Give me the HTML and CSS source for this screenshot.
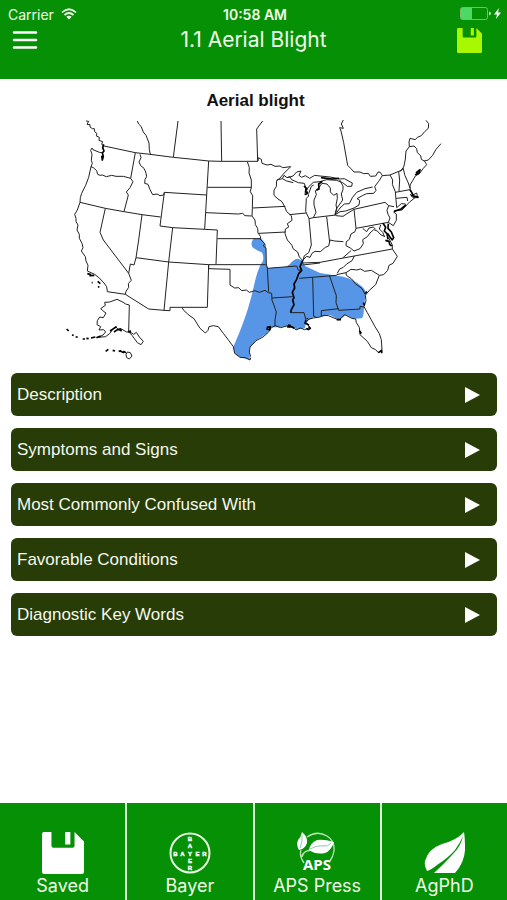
FILE: index.html
```html
<!DOCTYPE html>
<html lang="en">
<head>
<meta charset="utf-8">
<meta name="viewport" content="width=device-width, initial-scale=1">
<title>1.1 Aerial Blight</title>
<link rel="stylesheet" href="styles.css">
</head>
<body>
<svg class="defs" aria-hidden="true">
  <symbol id="floppy" viewBox="0 0 40 40"><path fill-rule="evenodd" d="M2 0H9V13Q9 15 11 15H29Q31 15 31 13V0L40 9V38Q40 40 38 40H2Q0 40 0 38V2Q0 0 2 0ZM23 0H27V12H22V1Q22 0 23 0Z"/></symbol>
</svg>
<header class="top">
  <div class="status">
    <span class="carrier">Carrier
      <svg class="wifi" viewBox="0 0 16 12" aria-hidden="true"><path d="M1 4.500Q8-2 15 4.500M3.500 7Q8 3 12.500 7" fill="none" stroke="currentColor" stroke-width="1.700"/><path d="M5.300 8.800Q8 6.500 10.700 8.800L8 11.500Z" fill="currentColor"/></svg>
    </span>
    <span class="time">10:58 AM</span>
    <svg class="battery" viewBox="0 0 42 14" aria-hidden="true"><rect x=".5" y=".5" width="27" height="12" rx="2" fill="none" stroke="#7fb96f"/><path d="M2 1H12V12H2Q1 12 1 11V2Q1 1 2 1Z" fill="#4cd964"/><path d="M29 4.500Q31 5 31 6.500T29 8.500Z" fill="#b5dfae"/><path d="M39 1L34 7.500H37L36 12L41 5.500H38Z" fill="#fff"/></svg>
  </div>
  <div class="nav">
    <button class="icon-button" aria-label="Menu"><svg class="menu" viewBox="0 0 26 18" aria-hidden="true"><path d="M2 1.500H24M2 9H24M2 16.500H24" stroke="#fff" stroke-width="2.500" stroke-linecap="round"/></svg></button>
    <h1>1.1 Aerial Blight</h1>
    <button class="icon-button save" aria-label="Save"><svg class="save-icon" aria-hidden="true"><use href="#floppy"/></svg></button>
  </div>
</header>
<main>
  <h2>Aerial blight</h2>
  <svg class="map" viewBox="0 0 1161 750" role="img" aria-label="Distribution map of aerial blight in the United States">
    <path class="range" d="M582 370Q570 383 577 396Q592 408 605 412Q613 425 608 440Q598 450 588 487Q580 520 574 545Q556 615 520 695L524 715L540 727L570 735L568 700L590 675L622 655L630 637L660 637L690 631L710 643L735 640L738 620L760 607L784 605L810 600L838 615L858 600L880 612L905 610Q912 605 912 575L917 538Q918 525 905 514Q885 495 850 485L780 474L735 453Q726 431 712 431Q700 433 690 447L678 455L625 460L618 447V390L608 375L604 370Z"/>
    <g class="line">
      <!-- Pacific Northwest and California -->
      <path d="M78 18L86 19L81 28L90 29L90 36L97 41L103 41L104 50L111 56L109 63L118 67L117 76L128 80L125 88L132 93"/>
      <path class="heavy" d="M131 88L128 98L132 108L127 114L130 124L127 135L125 122"/>
      <path d="M126 113L118 112L99 104L96 99L92 106L96 118L94 136L97 145L93 155L86 187L77 211L65 235L61 248L60 262L52 285L44 298L48 310L48 320L54 330L51 345L58 358L58 370L66 385L69 398L64 408L76 425L78 438L84 451L82 468L104 478L118 489L132 504L140 515L142 530L196 538L266 582L312 586L330 587V577H442L446 449"/>
      <path d="M132 93L226 113L270 118L340 127L390 132L446 138L484 139H594"/>
      <path d="M232 18L236 27L243 34L250 51L258 61L267 84L268 104L271 118M354 18L340 127M483 18L485 139M608 18L590 42L593 138"/>
      <path d="M93 155L100 158L110 167L113 178L120 181L127 180L139 185L155 181L168 184L190 184L212 190M226 113L212 190L219 200L210 218L199 231L205 240L192 290"/>
      <path d="M60 262L136 280L192 290L246 299L302 306"/>
      <path d="M240 118L243 128L237 141L242 152L252 160L257 171L260 184L255 194L254 205L264 208L270 224L278 239L291 237L300 242L311 240L313 232L440 240M313 232L300 333L338 338L434 343L472 345L468 447"/>
      <path d="M446 138L440 240L434 343M442 217H574M438 293L535 297L548 295L555 302L575 303M472 371H602"/>
      <path d="M136 280L120 352L130 375L206 475M246 299L236 375L228 428L222 450L211 447L206 475L214 496L205 506L206 517L198 529L196 538"/>
      <path d="M228 428L326 441L446 449H617M338 338L326 441L312 586M446 449V461L510 463V510"/>
      <path d="M366 577L371 586L382 596L390 603L402 611L410 624L420 640L436 654L444 646L447 635L460 632L475 635L490 655L506 676L520 695L524 715L540 727L556 728L570 735L572 728"/>
    </g>
    <g class="line" transform="translate(390 0)">
      <!-- Plains and upper Midwest -->
      <path d="M172 140L178 158L177 174L184 195L184 217L181 230L188 242L187 280L186 303L195 315L196 329L203 340L204 354L212 365L210 372L224 386L220 393L228 399L229 447"/>
      <path d="M204 138L205 128L214 133L216 145L231 150L243 148L255 154L270 153L278 158L302 155L283 174L269 190L260 197L259 215L252 225L252 241L264 252L276 260L284 275L290 290L304 302L306 316L292 326L296 336L286 342L285 356L292 375L306 391L309 401L323 411L328 426L338 436"/>
      <path d="M188 279L286 274M298 299L348 294M207 355L287 351M260 195L277 191L282 181L291 188L299 185L305 194L325 203L343 205L347 218L345 240M277 191L290 198L310 203M292 188L309 183L320 171L333 168L327 181L335 187L346 182L359 190L374 181L390 183L420 186L450 192L463 191L487 204L485 214L472 214L458 203L440 196L410 194L390 200L370 202L355 216L350 226L356 243L349 250L347 289L357 311L370 308L378 292L372 270L372 255L379 239L376 228L388 216L396 205L411 207L421 219L421 231L431 241L441 235L442 250L438 270L440 279L435 298M356 236L364 214L371 210M357 311L364 390L356 413L343 422L338 440"/>
      <path class="heavy" d="M342 213L349 220L347 230L352 233L346 240M379 226L387 222L386 207L397 199M393 188L425 192L447 190"/>
    </g>
    <g class="line" transform="translate(780 0)">
      <!-- Great Lakes east to New England -->
      <path d="M70 15L64 27L70 40L59 38L63 48L71 83L81 140L83 151L92 160L102 171L120 171L131 176L145 175L151 184L167 183L174 171L181 172L187 182L210 180L246 165"/>
      <path d="M59 195L69 213L69 224L64 237L68 255L51 279L45 300M-20 308L48 300M45 300L60 290L77 288L102 279L117 270L119 256L111 251L127 242L140 236L161 235L168 226L164 215L176 199L187 182M45 300L60 279L73 267L88 266L97 248L110 232L135 221L158 216M48 302L69 304L84 294L102 283L105 311L108 340L205 322M102 283L195 262L206 272L222 275"/>
      <path d="M20 305L29 382M108 340L105 350L93 357L88 373L79 380L78 392L91 399L102 408L120 401L130 386L128 374L142 365L150 354L161 344L172 348L183 360L193 364"/>
      <path d="M206 272L201 286L204 298L210 309L205 322L220 332L229 316L229 297L221 291M210 180L218 195L217 208L226 230L230 278M236 170L239 195L237 228M240 170L249 159L255 182L265 204L270 220M226 232L269 224L279 240L290 234L293 248L279 248L270 237M229 250L261 247L263 258M221 291L231 287L246 285L257 273L270 260L285 248M230 278L244 266L257 267"/>
      <path d="M318 16L326 26L325 40L314 50L304 62L292 67L286 74L270 70L267 81L268 95L258 108L256 132L252 153L246 165M268 95L282 93L290 101L292 113L302 122L304 133L314 139L320 149L310 160L298 176L286 183L278 197L270 210L271 224M312 138L325 135L338 121L348 103L363 86"/>
      <path class="heavy" d="M288 174L300 164L297 175L285 179M270 224L279 239L273 242M276 242L296 247M222 289L243 282L258 270M189 325L197 337L193 348L201 356L204 373M205 326L204 340L214 351L221 368L216 376"/>
      <path d="M128 340L140 350L147 339L160 336L167 343M182 330L178 342L188 352L194 366"/>
    </g>
    <g class="line" transform="translate(390 375)">
      <!-- South Central -->
      <path d="M120 135L134 144L146 143L155 152L169 150L178 157L195 152L208 157L225 151L235 158L245 160L246 181L252 196L259 216L255 239L255 258M229 72L232 85L320 78L325 91L332 90M232 85L236 155M246 174L308 170M302 218L342 218L347 237L355 235M368 112L371 229L378 232M328 115L440 106M338 75L390 69M338 61L350 49L360 52L366 40L375 34L391 35L406 22L416 18L420 0L434 3L460 5"/>
      <path d="M182 350L178 337L180 321L198 302L219 291L235 277L244 263L256 257L272 263L294 257L310 261L318 270L331 264L344 269L359 263L349 247L355 238L370 234L390 231L402 226L415 227L432 234L447 240L464 224L485 235L497 237L499 248L508 262L510 284L532 304L544 323L557 329L565 338L576 329L574 299L568 281L555 260L543 238L532 218L522 200"/>
      <path class="heavy" d="M338 61L330 80L335 91L326 101L320 118L312 132L314 144L307 157L312 173L308 180L312 194L304 209L302 218M230 263L241 260L239 270L229 266M294 255L301 257L293 261L305 261L313 265M348 239L345 250L357 255M356 260L361 265L355 269L349 265M508 272L513 278L511 282M565 338L575 331L575 340M440 239L453 239"/>
    </g>
    <g class="line" transform="translate(780 375)">
      <!-- Southeast -->
      <path d="M-54 69L0 67L70 54L217 27L232 49L219 70L207 76L203 91L191 104L178 106L167 134L148 151L136 166L138 182L132 200M103 48L96 62L80 72L70 82L59 87L52 100M68 54L93 32M50 104L78 98L93 88L110 90L122 87L134 94L154 91L178 106M78 98L79 106L95 117L106 131L126 146L136 164M28 106L49 167L48 188L56 211L120 207V199L132 201M56 206L4 212V228M205 -8L217 15V27"/>
      <path class="heavy" d="M196 1L207 4L209 13L215 18M203 -20L211 -7L217 0M136 161L140 154M130 188L134 196"/>
    </g>
    <g class="line" transform="translate(0 375)">
      <!-- Alaska and Hawaii -->
      <path d="M208 195L197 192L186 185L171 178L149 186L134 187L136 196L122 206L132 215L138 219L130 233L119 231L112 242L111 254L122 260L117 270L131 269L137 276L129 285L115 292M115 292L137 290L151 279L157 268L166 260L174 267L186 268L200 276H210L211 270M208 195L206 275L216 286L232 308L243 314L250 304L238 291L229 277L221 283L210 276M198 344L202 336L211 338L216 348L208 357L200 353Z"/>
      <path class="heavy" d="M20 267L26 273M36 285L41 286M47 290L53 292M68 297H75M79 295L86 296M93 294L106 291M109 293L122 288M150 273L161 266L170 260M162 276L169 271L184 266M176 268L185 273M204 274L213 276M137 334L145 328M158 331L165 333M176 334L184 332M182 334L192 338M190 334L198 338M82 101L93 104M88 107L103 106M95 128H98M113 124L121 131M114 139L118 142"/>
    </g>
  </svg>
  <div class="topics">
    <button class="topic">Description<span class="arrow"></span></button>
    <button class="topic">Symptoms and Signs<span class="arrow"></span></button>
    <button class="topic">Most Commonly Confused With<span class="arrow"></span></button>
    <button class="topic">Favorable Conditions<span class="arrow"></span></button>
    <button class="topic">Diagnostic Key Words<span class="arrow"></span></button>
  </div>
</main>
<nav class="tabs">
  <a href="#saved"><svg class="tab-icon" aria-hidden="true"><use href="#floppy"/></svg><span>Saved</span></a>
  <a href="#bayer"><svg class="tab-icon" viewBox="0 0 42 42" aria-hidden="true"><circle cx="21" cy="21" r="19.500" fill="none" stroke="#e6f6e0" stroke-width="2"/><g class="bayer-text"><text x="6.500" y="23.500">B</text><text x="13.500" y="23.500">A</text><text x="21" y="23.500">Y</text><text x="28.500" y="23.500">E</text><text x="35.500" y="23.500">R</text><text x="21" y="9">B</text><text x="21" y="16">A</text><text x="21" y="31">E</text><text x="21" y="38">R</text></g></svg><span>Bayer</span></a>
  <a href="#aps"><svg class="tab-icon" viewBox="0 0 42 42" aria-hidden="true"><path d="M11 5Q21-2 31 4Q39 9 38 19Q37 25 34 29M5 18Q3 24 8 31M6 25Q7 18 17 18" fill="none" stroke="#bce4b5" stroke-width="1.300"/><path d="M6 0Q12 5 11 11Q9 17 3 18Q0 13 2 8Q5 5 6 0ZM13 18Q14 11 21 8Q28 7 38 10Q35 19 29 21Q20 23 13 18Z"/><path d="M6 3Q7 9 4 16M14 17Q22 13 27 14T35 11" fill="none" stroke="#8fc4bc" stroke-width="1"/><text class="aps-text" x="21" y="38">APS</text></svg><span>APS Press</span></a>
  <a href="#agphd"><svg class="tab-icon" viewBox="0 0 42 42" aria-hidden="true"><path d="M41 0Q34 8 19 12Q5 17 2 29Q1 34 4 39Q8 38 14 33Q25 26 32 18Q37 11 40 4Q38 14 30 22Q20 33 11 41H32Q43 29 42 13Q42 6 41 0Z"/></svg><span>AgPhD</span></a>
</nav>
</body>
</html>
```

FILE: styles.css
```css
* { box-sizing: border-box; }
body {
  margin: 0;
  min-height: 100vh;
  display: flex;
  flex-direction: column;
  background: #fff;
  color: #111;
  font-family: "Liberation Sans", sans-serif;
}
button { border: 0; font: inherit; cursor: pointer; }
.defs { position: absolute; width: 0; height: 0; }
.top {
  height: 79px;
  background: #069006;
  color: #f0fbea;
  font-family: Inter, sans-serif;
}
.status {
  display: grid;
  grid-template-columns: 1fr auto 1fr;
  align-items: center;
  height: 26px;
  padding: 2px 5px 0 8px;
  font-size: 14px;
}
.carrier { display: flex; align-items: center; gap: 7px; }
.wifi { width: 16px; height: 12px; }
.time { font-weight: 600; }
.battery { width: 42px; height: 14px; justify-self: end; }
.nav {
  display: grid;
  grid-template-columns: 1fr auto 1fr;
  align-items: center;
  height: 28px;
  padding: 0 12px;
}
.nav h1 { margin: 0; font-size: 21px; font-weight: 400; line-height: 28px; }
.icon-button { display: flex; padding: 0; background: none; justify-self: start; }
.save { justify-self: end; padding-right: 13px; }
.menu { width: 26px; height: 18px; }
.save-icon { width: 25px; height: 25px; fill: #a8f800; }
main { flex: 1; }
h2 {
  margin: 11px 0 4px;
  padding-left: 4px;
  text-align: center;
  font-size: 17px;
  line-height: 21px;
}
.map { display: block; width: 387px; max-width: 100%; margin: 0 auto; }
.range { fill: #5796e6; }
.line { fill: none; stroke: #222; stroke-width: 3; stroke-linejoin: round; }
.heavy { stroke: #000; stroke-width: 5; }
.topics { display: grid; gap: 12px; padding: 8px 10px 12px 11px; }
.topic {
  display: flex;
  align-items: center;
  justify-content: space-between;
  height: 43px;
  padding: 0 17px 0 6px;
  border-radius: 6px;
  background: #273c06;
  color: #f4f8ee;
  font-size: 17px;
  text-align: left;
}
.arrow {
  border-left: 15px solid #fff;
  border-top: 8px solid transparent;
  border-bottom: 8px solid transparent;
}
.tabs {
  display: grid;
  grid-template-columns: repeat(4, 1fr);
  gap: 2px;
  height: 97px;
  background: #dff3d8;
}
.tabs a {
  display: flex;
  flex-direction: column;
  align-items: center;
  justify-content: flex-end;
  padding-bottom: 2px;
  background: #069006;
  color: #f0fbea;
  font: 18px/24px Inter, sans-serif;
  text-decoration: none;
}
.tab-icon { width: 42px; height: 42px; fill: #fff; }
.bayer-text {
  font: bold 6px "Liberation Sans", sans-serif;
  text-anchor: middle;
  stroke: #fff;
  stroke-width: .4;
}
.aps-text { font: bold 15px "Open Sans", sans-serif; text-anchor: middle; }
```
